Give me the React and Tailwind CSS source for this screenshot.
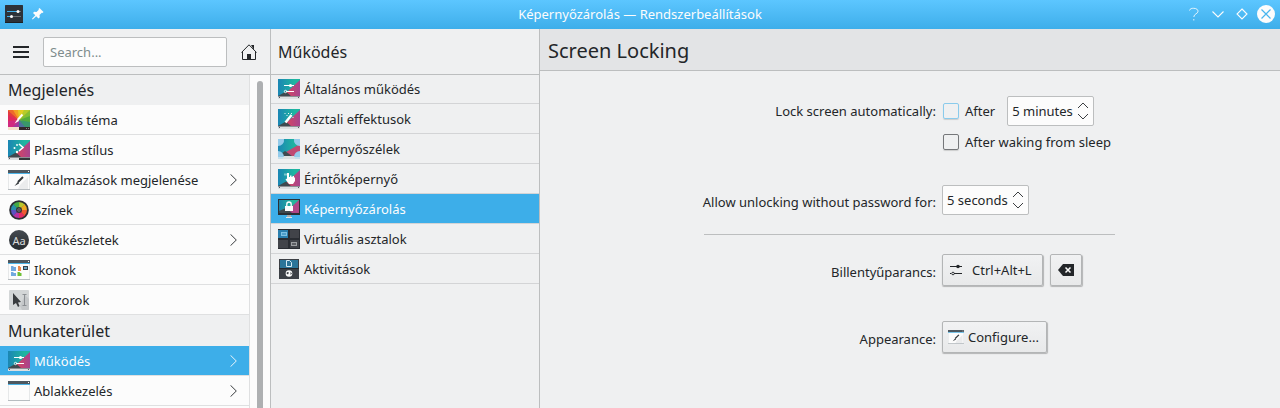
import React, { useState } from 'react'

function PlasmaBase({ id, children }) {
  return (
    <svg width="22" height="20" viewBox="0 0 22 20" className="shrink-0">
      <defs>
        <linearGradient id={`${id}-a`} x1="0" y1="0" x2="1" y2="0">
          <stop offset="0" stopColor="#1b86b4" />
          <stop offset="0.75" stopColor="#1fb5a0" />
        </linearGradient>
        <linearGradient id={`${id}-b`} x1="0" y1="0" x2="1" y2="0">
          <stop offset="0" stopColor="#d8455f" />
          <stop offset="1" stopColor="#a6448f" />
        </linearGradient>
      </defs>
      <rect width="22" height="20" fill={`url(#${id}-a)`} />
      <path d="M22 1L8 14l4 4h10z" fill={`url(#${id}-b)`} />
      <path d="M0 17l8-4.500 6 5.500H0z" fill="#3f4a50" />
      <rect y="17" width="22" height="1" fill="#8d8f95" />
      <rect y="18" width="22" height="2" fill="#dcdfe1" />
      <path d="M1 18.500h1M20 18.500h1" stroke="#55595c" />
      {children}
    </svg>
  )
}

function BehaviourIcon({ id }) {
  return (
    <PlasmaBase id={id}>
      <path d="M6 6.500h10M8 12.500h8" stroke="#fff" />
      <circle cx="12.500" cy="6.500" r="1.600" fill="#fff" />
      <circle cx="7.500" cy="12.500" r="1.200" fill="none" stroke="#fff" strokeWidth="0.900" />
    </PlasmaBase>
  )
}

function EffectsIcon() {
  return (
    <PlasmaBase id="effects">
      <path d="M7.500 13.500l6-7.500" stroke="#fff" strokeWidth="2.400" />
      <path d="M6.500 4.500h1M8.500 6.500h1M10 4.500h1M13 4.500h1M14.500 8.500h1" stroke="#e5f5f4" />
    </PlasmaBase>
  )
}

function EdgesIcon() {
  return (
    <svg width="22" height="20" viewBox="0 0 22 20" className="shrink-0">
      <defs>
        <linearGradient id="edges-a">
          <stop offset="0" stopColor="#1b86b4" />
          <stop offset="0.750" stopColor="#1fb5a0" />
        </linearGradient>
      </defs>
      <rect width="22" height="20" fill="url(#edges-a)" />
      <path d="M22 5L8 13l5 5h9z" fill="#c04a73" />
      <path d="M0 17l7-5 7 5z" fill="#3f4a50" />
      <rect y="17" width="22" height="3" fill="#dcdfe1" />
      <path d="M0 0h6a6 6 0 01-6 7zM22 0h-6a6 6 0 006 7zM0 12a6 6 0 016 6H0zM22 12a6 6 0 00-6 6h6z" fill="#94cbea" />
      <path d="M0 18h5v2H0zM17 18h5v2h-5z" fill="#c5dfec" />
    </svg>
  )
}

function TouchIcon() {
  return (
    <PlasmaBase id="touch">
      <path d="M6 5.500h5" stroke="#b9e3e2" strokeWidth="2" opacity="0.600" />
      <path d="M9 4h2v4h1V6.500h1.500V8h1V7H16v1.500h1V12l-2 3h-4l-3.500-4.500L9 9.500z" fill="#fff" />
    </PlasmaBase>
  )
}

function PlasmaStyleIcon() {
  return (
    <PlasmaBase id="style">
      <path d="M11 18h11v2H11z" fill="#34393c" />
      <path d="M11 4l4 3.500-4 3.500" fill="none" stroke="#fff" strokeWidth="1.600" />
      <circle cx="9" cy="5" r="0.900" fill="#fff" />
      <circle cx="6.500" cy="8" r="1" fill="#fff" />
      <circle cx="9" cy="12" r="1.200" fill="#fff" />
    </PlasmaBase>
  )
}

function LockIcon() {
  return (
    <svg width="22" height="20" viewBox="0 0 22 20" className="shrink-0">
      <defs>
        <linearGradient id="lock-a">
          <stop offset="0" stopColor="#1b86a9" />
          <stop offset="0.700" stopColor="#25b59b" />
        </linearGradient>
      </defs>
      <rect width="22" height="16" fill="#2a3036" />
      <rect x="1" y="1" width="20" height="13" fill="url(#lock-a)" />
      <path d="M21 1L10 11l3 3h8z" fill="#b04587" />
      <path d="M1 12l7-3 6 5H1z" fill="#3f4a50" />
      <path d="M9 16h4v2H9z" fill="#a4abb0" />
      <path d="M8 18h6v1H8z" fill="#e2e5e7" />
      <path d="M8.800 7V5.200a2.200 2.200 0 014.400 0V7" fill="none" stroke="#fff" strokeWidth="1.300" />
      <rect x="7" y="7" width="8" height="5" fill="#fcfcfc" />
    </svg>
  )
}

function DesktopsIcon() {
  return (
    <svg width="22" height="20" viewBox="0 0 22 20" className="shrink-0">
      <rect width="22" height="20" fill="#292c32" />
      <rect x="0" y="1" width="10" height="8" fill="#2a7fae" />
      <rect x="12" y="1" width="9" height="8" fill="#414349" />
      <rect x="0" y="11" width="10" height="8" fill="#414349" />
      <rect x="12" y="11" width="9" height="8" fill="#414349" />
      <rect x="3.500" y="3.500" width="5" height="3" fill="#4e9ec9" stroke="#7fc0e2" />
      <rect x="13.500" y="13.500" width="5" height="3" fill="#5e6065" stroke="#9c9ea1" />
    </svg>
  )
}

function ActivitiesIcon() {
  return (
    <svg width="22" height="20" viewBox="0 0 22 20" className="shrink-0">
      <rect x="1" width="20" height="20" fill="#3c4046" />
      <rect x="2" y="1" width="18" height="8" fill="#2c7599" />
      <rect x="1" y="9" width="20" height="1" fill="#24272b" />
      <path d="M8.500 1.500h3l2 2v4h-5z" fill="none" stroke="#d8ebf4" />
      <circle cx="11" cy="14.500" r="3.300" fill="#fcfcfc" />
      <path d="M9 13l2 .5-1 2-1.500-1zM12.500 13l1.500 1.500-1.500 1.500z" fill="#3c4046" />
    </svg>
  )
}

function WindowIcon({ width = 22, height = 20, children }) {
  return (
    <svg width={width} height={height} viewBox="0 0 22 20" preserveAspectRatio="none" className="shrink-0">
      <rect width="22" height="20" fill="#d0d4d7" />
      <rect x="0.500" y="3" width="21" height="16" fill="#fcfcfc" />
      <path d="M0 20L0 19h22v1z" fill="#b7bcc0" />
      <rect width="22" height="3" fill="#4d5860" />
      <rect y="3" width="22" height="1" fill="#4db5e9" />
      <rect x="20" y="1" width="1" height="1" fill="#fcfcfc" />
      {children}
    </svg>
  )
}

function AppStyleIcon(props) {
  return (
    <WindowIcon {...props}>
      <path d="M15 7L10 12" stroke="#33383b" strokeWidth="1.900" />
      <path d="M10.500 11L6.500 16l4.500-2.500z" fill="#33383b" />
      <path d="M12 15l8-8v12h-10z" fill="#aab0b4" opacity="0.200" />
    </WindowIcon>
  )
}

function IconsIcon() {
  return (
    <WindowIcon>
      <path d="M3 6h2l1 1h2v4H3zM3 12h2l1 1h2v3H3z" fill="#72a9df" />
      <path d="M10 6h2v1h1v4h-3z" fill="#f08b4c" />
      <path d="M9.500 12h2l1 1h1v3h-4z" fill="#6dc035" />
      <rect x="15" y="6" width="5" height="4" fill="#34424d" />
      <rect x="16" y="7" width="3" height="2" fill="#6ba7c7" />
    </WindowIcon>
  )
}

function GlobalThemeIcon() {
  return (
    <svg width="22" height="20" viewBox="0 0 22 20" className="shrink-0">
      <rect width="22" height="20" fill="#e9b323" />
      <path d="M11 10L0 0v6z" fill="#e23b3f" />
      <path d="M11 10L0 0h6z" fill="#ee6a2b" />
      <path d="M11 10L5 0h6z" fill="#f2a022" />
      <path d="M11 10L10 0h7z" fill="#e3cd25" />
      <path d="M11 10L16 0h6z" fill="#b5cc2b" />
      <path d="M11 10L22 0v7z" fill="#83bf33" />
      <path d="M11 10L22 6v7z" fill="#55ac3c" />
      <path d="M11 10L22 12v6h-6z" fill="#39976a" />
      <path d="M11 10L0 5v7z" fill="#e02a5c" />
      <path d="M11 10L0 11v7h5z" fill="#d12a80" />
      <path d="M11 10L4 18h8z" fill="#a13a9c" />
      <path d="M11 10L11 18h7z" fill="#4d6f9c" />
      <path d="M14.500 4.500L10 9.500" stroke="#fff" strokeWidth="1.900" />
      <path d="M10 8.500L6.500 13.500l4.500-2.500z" fill="#fff" />
      <rect y="17" width="11" height="3" fill="#f5e0cb" />
      <rect x="11" y="17" width="11" height="3" fill="#34272b" />
      <path d="M18 18.500h3" stroke="#8c8688" strokeDasharray="1 1" />
    </svg>
  )
}

const WHEEL = ['#b7c72d', '#eda820', '#ee5a31', '#e32c62', '#b531a2', '#5b51c1', '#278fac', '#43a946']

function ColorsIcon() {
  return (
    <svg width="22" height="20" viewBox="0 0 22 20" className="shrink-0">
      <circle cx="11" cy="10" r="9.800" fill="#2b2e33" />
      {WHEEL.map((c, i) => (
        <path key={c} d="M11 10V2a8 8 0 015.900 2.600z" fill={c} transform={`rotate(${i * 45} 11 10)`} />
      ))}
      <circle cx="11" cy="10" r="3" fill="#33363b" />
      <circle cx="11" cy="10" r="1.300" fill="none" stroke="#85888c" strokeWidth="0.700" />
    </svg>
  )
}

function FontsIcon() {
  return (
    <span className="flex h-5 w-[22px] shrink-0 justify-center">
      <span className="flex size-5 items-center justify-center rounded-full bg-linear-to-b from-[#454b51] to-[#272b2f] text-[11px] leading-none text-[#d8dadb]">
        Aa
      </span>
    </span>
  )
}

function CursorsIcon() {
  return (
    <svg width="22" height="20" viewBox="0 0 22 20" className="shrink-0">
      <rect x="1" width="20" height="20" rx="1" fill="#d3d6d7" />
      <path d="M12 16l5-11 4 4v11h-7z" fill="#aeb2b4" opacity="0.400" />
      <path d="M5 3v12l3-2 2 4 1.500-1-1.500-3.500 3-.5z" fill="#393c3f" />
      <path d="M14.500 4.500h4M14.500 15.500h4M16.500 4.500v11" stroke="#85898c" strokeWidth="0.900" />
    </svg>
  )
}

function ConfigureIcon() {
  return (
    <svg width="12" height="12" viewBox="0 0 12 12" className="shrink-0">
      <path d="M0 2.500h12M4 9.500h8M0 9.500h1" stroke="#232629" />
      <circle cx="8" cy="2.500" r="1.800" fill="#232629" />
      <circle cx="3" cy="9.500" r="1.300" fill="none" stroke="#232629" strokeWidth="0.900" />
    </svg>
  )
}

const CATEGORIES = [
  {
    title: 'Megjelenés',
    items: [
      { label: 'Globális téma', icon: <GlobalThemeIcon /> },
      { label: 'Plasma stílus', icon: <PlasmaStyleIcon /> },
      { label: 'Alkalmazások megjelenése', icon: <AppStyleIcon />, arrow: true },
      { label: 'Színek', icon: <ColorsIcon /> },
      { label: 'Betűkészletek', icon: <FontsIcon />, arrow: true },
      { label: 'Ikonok', icon: <IconsIcon /> },
      { label: 'Kurzorok', icon: <CursorsIcon /> },
    ],
  },
  {
    title: 'Munkaterület',
    items: [
      { label: 'Működés', icon: <BehaviourIcon id="workspace" />, arrow: true },
      { label: 'Ablakkezelés', icon: <WindowIcon />, arrow: true },
    ],
  },
]

const PAGES = [
  { label: 'Általános működés', icon: <BehaviourIcon id="general" /> },
  { label: 'Asztali effektusok', icon: <EffectsIcon /> },
  { label: 'Képernyőszélek', icon: <EdgesIcon /> },
  { label: 'Érintőképernyő', icon: <TouchIcon /> },
  { label: 'Képernyőzárolás', icon: <LockIcon /> },
  { label: 'Virtuális asztalok', icon: <DesktopsIcon /> },
  { label: 'Aktivitások', icon: <ActivitiesIcon /> },
]

function TitleBar() {
  return (
    <header className="flex h-[29px] shrink-0 items-center bg-linear-to-b from-[#5cc6ff] to-[#3daeea] pb-px text-[#fcfcfc]">
      <div className="flex w-[100px] items-center gap-[9px] pl-[5px]">
        <svg width="18" height="18" viewBox="0 0 18 18">
          <rect width="18" height="18" rx="0.500" fill="#2d3238" />
          <path d="M0 17.500h18" stroke="#1d2023" />
          <path d="M2 6.500h11M2 11.500h4" stroke="#3daee9" />
          <path d="M13 6.500h3M7 11.500h9" stroke="#6b7075" />
          <circle cx="13" cy="6.500" r="1.500" fill="#fcfcfc" />
          <circle cx="6.500" cy="11.500" r="1.500" fill="#fcfcfc" />
        </svg>
        <svg width="12" height="12" viewBox="0 0 12 12" fill="#fcfcfc">
          <path d="M7.500 0L11.500 4l-1 1-.7-.2L7.500 7l.3 2.300-1.300 1.200-2.300-2.300L.7 11.500 0 10.800l3.300-3.500L1 5l1.200-1.200L4.500 4l2.300-2.200L6.500 1z" />
        </svg>
      </div>
      <h1 className="flex-1 pl-[72px] text-center">Képernyőzárolás — Rendszerbeállítások</h1>
      <div className="flex w-[172px] items-center justify-end pr-[5px]">
        <svg width="90" height="18" viewBox="0 0 90 18" fill="none" stroke="#fcfcfc">
          <path d="M4.500 5.500C5 3.500 7 3.300 8.500 3.300c3 0 4.500 1.300 4.500 3 0 2.500-4.200 2.600-4.200 5.700M8.800 14v1.500" opacity="0.850" />
          <path d="M27.500 6.500L33 12l5.500-5.500" strokeWidth="1.100" />
          <path d="M57 4l5 5-5 5-5-5z" strokeWidth="1.100" />
          <circle cx="81" cy="9" r="9" fill="#fcfcfc" stroke="none" />
          <path d="M76.500 4.500l9 9M85.500 4.500l-9 9" stroke="#48b5ef" strokeWidth="1.200" />
        </svg>
      </div>
    </header>
  )
}

function Sidebar() {
  const [selected, setSelected] = useState('Működés')

  return (
    <aside className="flex w-[271px] shrink-0 flex-col border-r border-[#bcbebf]">
      <div className="flex h-[46px] shrink-0 items-center border-b border-[#bcbebf] pl-[13px] pt-px">
        <svg width="16" height="12" viewBox="0 0 16 12">
          <path d="M0 1h16M0 6h16M0 11h16" stroke="#232629" strokeWidth="2" />
        </svg>
        <input
          placeholder="Search..."
          className="ml-3.5 h-[30px] w-[184px] rounded-[2px] border border-[#bcbebf] bg-[#fcfcfc] px-1.5 outline-none placeholder:text-[#7f8c8d]"
        />
        <svg width="16" height="16" viewBox="0 0 16 16" className="ml-3.5">
          <path d="M.5 8.500L8 .8l7.500 7.700M1.500 7.500v8h13v-8" fill="none" stroke="#232629" />
          <path d="M10 1h3v5zM6 10h4v6H6z" fill="#232629" />
        </svg>
      </div>
      <div className="flex min-h-0 flex-1 overflow-hidden bg-[#fcfcfc]">
        <nav className="w-[250px] border-r border-[#dfe0e1]">
          {CATEGORIES.map((category) => (
            <section key={category.title}>
              <h2 className="h-[30px] bg-[#eff0f1] pl-2 text-base leading-[30px] [section+section>&]:h-[31px] [section+section>&]:leading-[32px]">
                {category.title}
              </h2>
              {category.items.map(({ label, icon, arrow }) => (
                <button
                  key={label}
                  type="button"
                  onClick={() => setSelected(label)}
                  className={`flex h-[30px] w-full items-center gap-1 border-b border-[#dfe0e1] pl-2 pr-3 pt-px text-left ${
                    selected === label ? 'bg-[#3daee9] text-[#fcfcfc]' : ''
                  }`}
                >
                  {icon}
                  <span className="flex-1">{label}</span>
                  {arrow && (
                    <svg width="7" height="12" viewBox="0 0 7 12" fill="none" stroke="currentColor">
                      <path d="M.5.300L6.300 6 .5 11.700" strokeWidth="0.900" />
                    </svg>
                  )}
                </button>
              ))}
            </section>
          ))}
        </nav>
        <div className="flex-1 pl-[7px] pt-1.5">
          <div className="h-[400px] w-1.5 rounded-full bg-[#aeb0b2]" />
        </div>
      </div>
    </aside>
  )
}

function PageList() {
  const [selected, setSelected] = useState('Képernyőzárolás')

  return (
    <nav className="w-[269px] shrink-0 border-r border-[#bcbebf]">
      <h2 className="h-[46px] border-b border-[#bcbebf] pl-[7px] text-base leading-[46px]">Működés</h2>
      <div className="-mt-px">
        {PAGES.map(({ label, icon }) => (
          <button
            key={label}
            type="button"
            onClick={() => setSelected(label)}
            className={`flex h-[30px] w-full items-center gap-1 border-b border-[#d3d4d6] pl-[7px] pt-px text-left ${
              selected === label ? 'bg-[#3daee9] text-[#fcfcfc]' : ''
            }`}
          >
            {icon}
            {label}
          </button>
        ))}
      </div>
    </nav>
  )
}

function SpinBox({ value }) {
  return (
    <div className="flex h-[30px] w-[87px] items-center justify-between rounded-[2px] border border-[#bcbebf] bg-[#fcfcfc] pl-1 pr-1">
      <span className="whitespace-nowrap">{value}</span>
      <svg width="12" height="18" viewBox="0 0 12 18" fill="none" stroke="#3b3e41" className="shrink-0">
        <path d="M1 6l5-5 5 5M1 12l5 5 5-5" />
      </svg>
    </div>
  )
}

function CheckBox({ label, hovered }) {
  return (
    <label className="flex items-center gap-1.5 pl-px">
      <input
        type="checkbox"
        className={`size-4 appearance-none rounded-[2px] border shadow-[0_1px_1px_rgba(0,0,0,0.15)] ${
          hovered ? 'border-[#8acbec]' : 'border-[#75777a]'
        }`}
      />
      {label}
    </label>
  )
}

function Button({ className, children }) {
  return (
    <button
      type="button"
      className={`flex h-8 items-center rounded-[2px] border border-[#b3b5b6] bg-linear-to-b from-[#f1f2f3] to-[#e8e9ea] shadow-[0.5px_1px_1px_rgba(0,0,0,0.25)] ${className}`}
    >
      {children}
    </button>
  )
}

function FormLabel({ children, className = '' }) {
  return <div className={`w-[397px] shrink-0 pr-px text-right ${className}`}>{children}</div>
}

function ScreenLocking() {
  return (
    <main className="min-w-0 flex-1">
      <h2 className="h-[42px] border-b border-[#bcbebf] bg-[#e3e4e6] pl-2 text-[20px] leading-[43px]">Screen Locking</h2>
      <form className="flex flex-col pt-[25px]">
        <div className="flex h-[30px] items-center gap-[5px]">
          <FormLabel>Lock screen automatically:</FormLabel>
          <CheckBox label="After" hovered />
          <div className="ml-[7px]">
            <SpinBox value="5 minutes" />
          </div>
        </div>
        <div className="flex h-8 items-center pl-[402px]">
          <CheckBox label="After waking from sleep" />
        </div>
        <div className="mt-[27px] flex h-[30px] items-center gap-[5px]">
          <FormLabel className="pt-[3px]">Allow unlocking without password for:</FormLabel>
          <SpinBox value="5 seconds" />
        </div>
        <hr className="ml-[164px] mt-[19px] w-[411px] border-[#bcbebf]" />
        <div className="mt-[19px] flex h-8 items-center gap-[5px]">
          <FormLabel className="pt-[3px]">Billentyűparancs:</FormLabel>
          <Button className="w-[101px] gap-2.5 pl-[7px]">
            <ConfigureIcon />
            Ctrl+Alt+L
          </Button>
          <Button className="ml-0.5 w-8 justify-center">
            <svg width="16" height="12" viewBox="0 0 16 12">
              <path d="M0 6l5-6h11v12H5z" fill="#232629" />
              <path d="M7.500 3.500l5 5M12.500 3.500l-5 5" stroke="#fcfcfc" strokeWidth="1.500" />
            </svg>
          </Button>
        </div>
        <div className="mt-[35px] flex h-8 items-center gap-[5px]">
          <FormLabel className="pt-[3px]">Appearance:</FormLabel>
          <Button className="w-[105px] gap-1 pl-[5px]">
            <AppStyleIcon width={16} height={14} />
            Configure...
          </Button>
        </div>
      </form>
    </main>
  )
}

export default function App() {
  return (
    <div className="flex h-[408px] w-[1280px] flex-col overflow-hidden bg-[#eff0f1] font-['Noto_Sans',sans-serif] text-[13px] leading-[18px] text-[#232629]">
      <TitleBar />
      <div className="flex min-h-0 flex-1">
        <Sidebar />
        <PageList />
        <ScreenLocking />
      </div>
    </div>
  )
}
